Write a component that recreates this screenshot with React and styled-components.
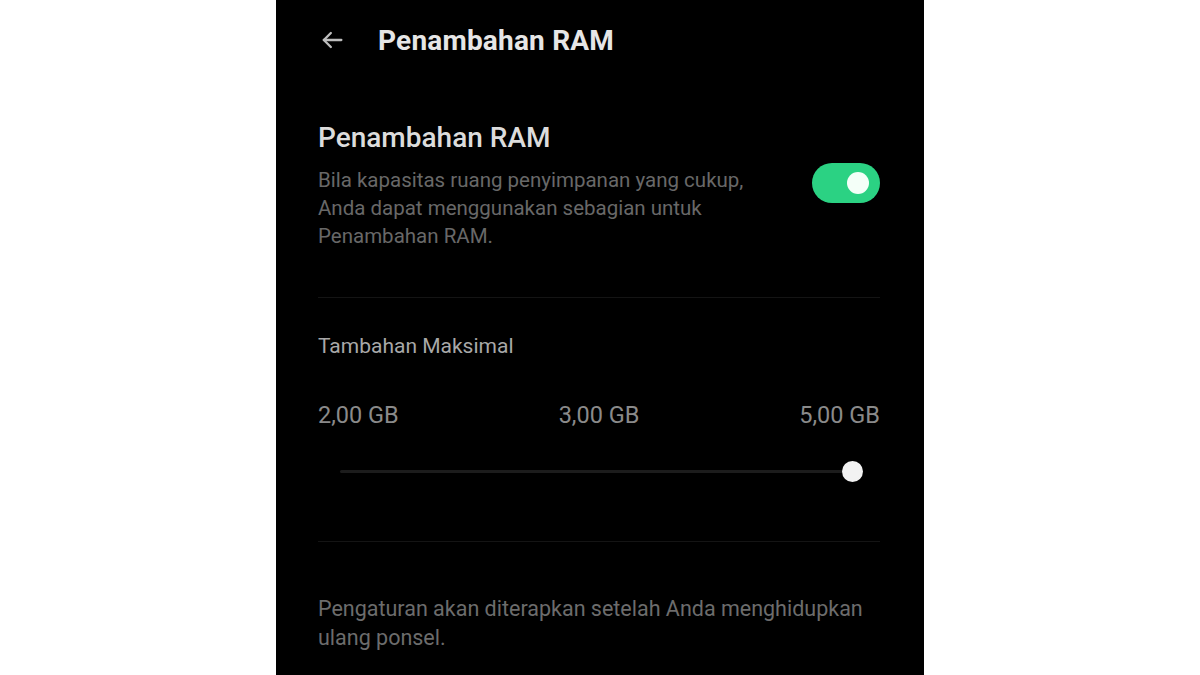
import styled, { createGlobalStyle } from "styled-components";

const Global = createGlobalStyle`
  html, body {
    margin: 0;
    background: #fff;
    font-family: Roboto, "Noto Sans", "Liberation Sans", sans-serif;
  }
`;

const Page = styled.div`
  display: flex;
  justify-content: center;
  height: 675px;
  overflow: hidden;
`;

const Phone = styled.div`
  width: 648px;
  height: 675px;
  background: #000;
  padding: 0 44px 0 42px;
  box-sizing: border-box;
  display: flex;
  flex-direction: column;
`;

const Header = styled.div`
  height: 80px;
  display: flex;
  align-items: center;
  gap: 32px;
  color: #e6e6e6;
`;

const HeaderTitle = styled.div`
  font-size: 28px;
  font-weight: 700;
  letter-spacing: 0.2px;
`;

const Row = styled.div`
  display: flex;
  align-items: flex-start;
  justify-content: space-between;
  padding-top: 40px;
  padding-bottom: 47px;
  border-bottom: 1px solid #141414;
`;

const TextCol = styled.div`
  max-width: 440px;
`;

const Title = styled.div`
  font-size: 28px;
  font-weight: 500;
  color: #dcdcdc;
  line-height: 36px;
`;

const Desc = styled.div`
  margin-top: 10px;
  font-size: 20.5px;
  line-height: 28px;
  color: #686868;
`;

const Toggle = styled.div`
  margin-top: 43px;
  width: 68px;
  height: 40px;
  border-radius: 20px;
  background: #2bd283;
  display: flex;
  align-items: center;
  justify-content: flex-end;
  padding: 0 11px;
  box-sizing: border-box;
`;

const Knob = styled.div`
  width: 22px;
  height: 22px;
  border-radius: 50%;
  background: #f4fff8;
`;

const Section = styled.div`
  padding-top: 35px;
  padding-bottom: 68px;
  border-bottom: 1px solid #141414;
`;

const Label = styled.div`
  font-size: 21px;
  color: #a8a8a8;
  line-height: 26px;
`;

const Values = styled.div`
  margin-top: 42px;
  display: flex;
  justify-content: space-between;
  font-size: 23.5px;
  color: #8a8a8a;
`;

const Track = styled.div`
  margin: 41px 27px 0 22px;
  height: 3px;
  border-radius: 2px;
  background: #1c1c1c;
  position: relative;
`;

const Thumb = styled.div`
  position: absolute;
  right: -10px;
  top: -9px;
  width: 21px;
  height: 21px;
  border-radius: 50%;
  background: #f2f2f2;
`;

const Footer = styled.div`
  margin-top: 52px;
  font-size: 21.5px;
  line-height: 29px;
  color: #6c6c6c;
`;

const BackArrow = () => (
  <svg width="28" height="28" viewBox="0 0 24 24" fill="none" stroke="#bdbdbd" strokeWidth="2" strokeLinecap="round" strokeLinejoin="round">
    <path d="M20 12H5" />
    <path d="M11 6l-6 6 6 6" />
  </svg>
);

export default function App() {
  return (
    <Page>
      <Global />
      <Phone>
        <Header>
          <BackArrow />
          <HeaderTitle>Penambahan RAM</HeaderTitle>
        </Header>
        <Row>
          <TextCol>
            <Title>Penambahan RAM</Title>
            <Desc>
              Bila kapasitas ruang penyimpanan yang cukup, Anda dapat menggunakan sebagian untuk Penambahan RAM.
            </Desc>
          </TextCol>
          <Toggle>
            <Knob />
          </Toggle>
        </Row>
        <Section>
          <Label>Tambahan Maksimal</Label>
          <Values>
            <span>2,00 GB</span>
            <span>3,00 GB</span>
            <span>5,00 GB</span>
          </Values>
          <Track>
            <Thumb />
          </Track>
        </Section>
        <Footer>
          Pengaturan akan diterapkan setelah Anda menghidupkan ulang ponsel.
        </Footer>
      </Phone>
    </Page>
  );
}
